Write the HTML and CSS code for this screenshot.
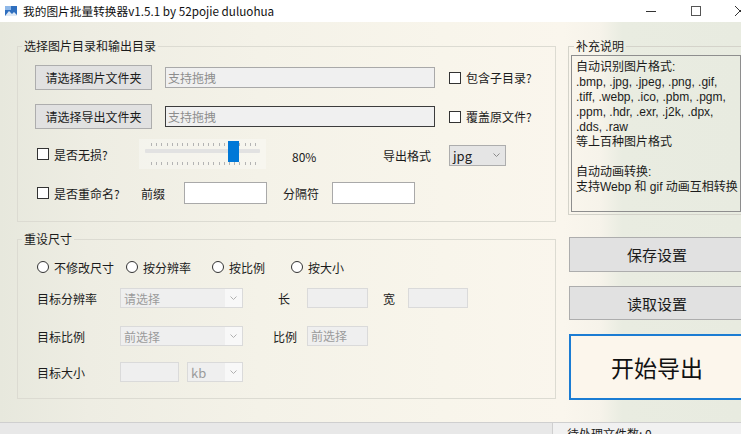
FILE: index.html
```html
<!DOCTYPE html>
<html lang="zh-CN">
<head>
    <meta charset="UTF-8">
    <meta name="viewport" content="width=device-width, initial-scale=1.0">
    <title>我的图片批量转换器v1.5.1 by 52pojie duluohua</title>
    <link rel="stylesheet" href="styles.css">
</head>
<body>
<div class="window">
    <div class="titlebar">
        <svg class="app-icon" viewBox="0 0 12 10" width="12" height="10">
            <rect x="0" y="0" width="12" height="10" fill="#2f6fbf"/>
            <rect x="0" y="0" width="6" height="4" fill="#8fb8e8"/>
            <path d="M0 10 L4 5 L7 8 L9 6 L12 9 L12 10 Z" fill="#dfe9f4"/>
        </svg>
        <span class="title">我的图片批量转换器v1.5.1 by 52pojie duluohua</span>
        <div class="win-controls">
            <span class="win-min"></span>
            <span class="win-max"></span>
            <span class="win-close">
                <svg viewBox="0 0 10 10" width="10" height="10"><path d="M0 0 L10 10 M10 0 L0 10" stroke="#333" stroke-width="1"/></svg>
            </span>
        </div>
    </div>

    <div class="main">
        <div class="left-col">
            <fieldset class="group group-dirs">
                <legend>选择图片目录和输出目录</legend>
                <div class="row row-dir1">
                    <button class="btn btn-pick">请选择图片文件夹</button>
                    <input class="path-input" type="text" placeholder="支持拖拽">
                    <input class="check check-dir" type="checkbox" id="sub-dir">
                    <label for="sub-dir" class="check-label">包含子目录?</label>
                </div>
                <div class="row row-dir2">
                    <button class="btn btn-pick">请选择导出文件夹</button>
                    <input class="path-input path-focus" type="text" placeholder="支持拖拽">
                    <input class="check check-dir" type="checkbox" id="overwrite">
                    <label for="overwrite" class="check-label">覆盖原文件?</label>
                </div>
                <div class="row row-quality">
                    <input class="check check-first" type="checkbox" id="lossless">
                    <label for="lossless" class="check-label lbl-lossless">是否无损?</label>
                    <div class="slider">
                        <div class="ticks"></div>
                        <div class="track"></div>
                        <div class="ticks ticks-bottom"></div>
                        <div class="thumb"></div>
                    </div>
                    <span class="quality-value">80%</span>
                    <span class="format-label">导出格式</span>
                    <div class="dropdown dropdown-format">
                        <span class="dropdown-text">jpg</span>
                        <span class="dropdown-arrow">
                            <svg viewBox="0 0 7 4" width="7" height="4"><polyline points="0.5,0.5 3.5,3.5 6.5,0.5" fill="none" stroke="#8a8a8a"/></svg>
                        </span>
                    </div>
                </div>
                <div class="row row-rename">
                    <input class="check check-first" type="checkbox" id="rename">
                    <label for="rename" class="check-label lbl-rename">是否重命名?</label>
                    <span class="cell cell-prefix">前缀</span>
                    <input class="name-input" type="text">
                    <span class="cell cell-sep">分隔符</span>
                    <input class="name-input" type="text">
                </div>
            </fieldset>

            <fieldset class="group group-size">
                <legend>重设尺寸</legend>
                <div class="row row-radios">
                    <label class="radio-item radio-w1"><input type="radio" name="mode" class="radio">不修改尺寸</label>
                    <label class="radio-item radio-w2"><input type="radio" name="mode" class="radio">按分辨率</label>
                    <label class="radio-item radio-w3"><input type="radio" name="mode" class="radio">按比例</label>
                    <label class="radio-item"><input type="radio" name="mode" class="radio">按大小</label>
                </div>
                <div class="row row-field row-res">
                    <span class="field-label">目标分辨率</span>
                    <div class="dropdown dropdown-off">
                        <span class="dropdown-text">请选择</span>
                        <span class="dropdown-arrow">
                            <svg viewBox="0 0 7 4" width="7" height="4"><polyline points="0.5,0.5 3.5,3.5 6.5,0.5" fill="none" stroke="#b0b0b0"/></svg>
                        </span>
                    </div>
                    <span class="cell cell-len">长</span>
                    <div class="box-off box-len"></div>
                    <span class="cell cell-wid">宽</span>
                    <div class="box-off box-wid"></div>
                </div>
                <div class="row row-field row-ratio">
                    <span class="field-label">目标比例</span>
                    <div class="dropdown dropdown-off">
                        <span class="dropdown-text">前选择</span>
                        <span class="dropdown-arrow">
                            <svg viewBox="0 0 7 4" width="7" height="4"><polyline points="0.5,0.5 3.5,3.5 6.5,0.5" fill="none" stroke="#b0b0b0"/></svg>
                        </span>
                    </div>
                    <span class="cell cell-ratio">比例</span>
                    <div class="box-off box-len">前选择</div>
                </div>
                <div class="row row-field row-target">
                    <span class="field-label">目标大小</span>
                    <div class="box-off box-size"></div>
                    <div class="dropdown dropdown-off dropdown-unit">
                        <span class="dropdown-text">kb</span>
                        <span class="dropdown-arrow">
                            <svg viewBox="0 0 7 4" width="7" height="4"><polyline points="0.5,0.5 3.5,3.5 6.5,0.5" fill="none" stroke="#b0b0b0"/></svg>
                        </span>
                    </div>
                </div>
            </fieldset>
        </div>

        <div class="right-col">
            <fieldset class="group-notes">
                <legend>补充说明</legend>
                <div class="notes">自动识别图片格式:<br>.bmp, .jpg, .jpeg, .png, .gif,<br>.tiff, .webp, .ico, .pbm, .pgm,<br>.ppm, .hdr, .exr, .j2k, .dpx,<br>.dds, .raw<br>等上百种图片格式<br><br>自动动画转换:<br>支持Webp 和 gif 动画互相转换</div>
            </fieldset>
            <button class="btn btn-side btn-save">保存设置</button>
            <button class="btn btn-side btn-load">读取设置</button>
            <button class="btn-start">开始导出</button>
        </div>
    </div>

    <div class="statusbar">
        <div class="status-left"></div>
        <div class="status-right">待处理文件数: 0</div>
    </div>
</div>
</body>
</html>
```

FILE: styles.css
```css
html, body {
    margin: 0;
    padding: 0;
    width: 741px;
    height: 434px;
    overflow: hidden;
}

body {
    font-family: "Noto Sans CJK SC", "Noto Sans", sans-serif;
    font-size: 12px;
    color: #1b1b1b;
}

.window {
    width: 741px;
    height: 434px;
    display: flex;
    flex-direction: column;
    background: linear-gradient(90deg, #e7e8dd 0%, #eeede3 12%, #f4f2e8 35%, #f8f5eb 60%, #faf6ed 76%, #f6f3ea 81%, #e9ece1 84%, #e8ebe0 100%);
}

/* title bar */
.titlebar {
    height: 22px;
    flex: none;
    background: #fff;
    display: flex;
    align-items: center;
}

.app-icon {
    margin-left: 5px;
}

.title {
    margin-left: 6px;
    line-height: 16px;
    font-size: 11.7px;
    color: #111;
}

.win-controls {
    margin-left: auto;
    display: flex;
    align-items: center;
    height: 22px;
}

.win-min {
    width: 10px;
    height: 1px;
    background: #333;
}

.win-max {
    width: 8px;
    height: 8px;
    border: 1px solid #555;
    margin-left: 35px;
}

.win-close {
    width: 6px;
    height: 10px;
    overflow: hidden;
    margin-left: 34px;
}

.win-close svg {
    display: block;
}

/* main area */
.main {
    height: 400px;
    flex: none;
    display: flex;
}

.left-col {
    width: 560px;
    flex: none;
}

.group {
    margin: 16px 0 0 17px;
    width: 539px;
    box-sizing: border-box;
    border: 1px solid #dcdbd2;
    padding: 0 0 17px 17px;
    min-width: 0;
}

.group legend, .group-notes legend {
    padding: 0 2px;
    line-height: 16px;
    font-size: 12px;
}

.group legend {
    margin-left: -13px;
}

.group-size {
    margin-top: 9px;
    padding-bottom: 16px;
}

.row {
    display: flex;
    align-items: center;
}

.row-dir1 { margin-top: 11px; height: 25px; }
.row-dir2 { margin-top: 14px; height: 25px; }
.row-quality { margin-top: 10px; height: 30px; }
.row-rename { margin-top: 13px; height: 22px; }

.btn {
    font-family: inherit;
    font-size: 12px;
    color: #1b1b1b;
    background: #e1e1e1;
    border: 1px solid #adadad;
    padding: 0;
    margin: 0;
}

.btn-pick {
    width: 117px;
    height: 25px;
}

.path-input {
    margin: 0 0 0 13px;
    width: 270px;
    height: 21px;
    box-sizing: border-box;
    border: 1px solid #a9a9a9;
    background: #f0f0f0;
    padding: 0 2px;
    font-family: inherit;
    font-size: 12px;
}

.path-focus {
    border-color: #3c3c3c;
}

.path-input::placeholder {
    color: #8d8d8d;
}

.check {
    appearance: none;
    -webkit-appearance: none;
    width: 12px;
    height: 12px;
    margin: 0;
    border: 1px solid #333;
    background: #fff;
    box-sizing: border-box;
    flex: none;
}

.check-dir {
    margin-left: 14px;
}

.check-first {
    margin-left: 2px;
}

.check-label {
    margin-left: 5px;
}

.lbl-lossless { width: 85px; }
.lbl-rename { width: 87px; }

/* slider */
.slider {
    position: relative;
    width: 127px;
    height: 30px;
    box-sizing: border-box;
    padding-top: 4px;
    background: rgba(255, 255, 255, 0.3);
    flex: none;
}

.ticks {
    height: 3px;
    width: 105px;
    margin-left: 12px;
    background: repeating-linear-gradient(90deg, #b4b4b4 0 1px, transparent 1px 5.2px);
}

.track {
    height: 4px;
    width: 115px;
    margin: 3px 0 0 6px;
    background: #e2e2e2;
    border-radius: 1px;
}

.ticks-bottom {
    margin-top: 9px;
}

.thumb {
    position: absolute;
    left: 89px;
    top: 2px;
    width: 11px;
    height: 21px;
    background: #0078d7;
}

.quality-value {
    margin-left: 26px;
    width: 91px;
    padding-top: 4px;
}

.format-label {
    width: 66px;
    padding-top: 3px;
}

.dropdown {
    display: flex;
    align-items: center;
    box-sizing: border-box;
    height: 20px;
}

.dropdown-text {
    flex: 1;
    padding-left: 3px;
}

.dropdown-arrow {
    width: 17px;
    height: 100%;
    display: flex;
    align-items: center;
    justify-content: center;
}

.dropdown-format {
    width: 57px;
    height: 21px;
    margin-top: 2px;
    background: #e5e5e5;
    border: 1px solid #adadad;
    font-size: 13px;
    color: #222;
}

.cell-prefix { width: 43px; }
.cell-sep { margin-left: 16px; width: 49px; }

.name-input {
    margin: 0;
    width: 83px;
    height: 22px;
    box-sizing: border-box;
    border: 1px solid #a9a9a9;
    background: #fff;
}

/* resize group */
.row-radios { margin-top: 12px; height: 16px; padding-left: 2px; }
.row-res { margin-top: 13px; height: 20px; }
.row-ratio { margin-top: 18px; height: 20px; }
.row-target { margin-top: 16px; height: 20px; }

.radio-item {
    display: flex;
    align-items: center;
}

.radio-w1 { width: 89px; }
.radio-w2 { width: 86px; }
.radio-w3 { width: 79px; }

.radio {
    appearance: none;
    -webkit-appearance: none;
    width: 12px;
    height: 12px;
    margin: 0 5px 0 0;
    border: 1px solid #333;
    border-radius: 50%;
    background: #fff;
    box-sizing: border-box;
}

.field-label {
    width: 83px;
    padding-left: 2px;
}

.dropdown-off {
    width: 123px;
    background: #efefef;
    border: 1px solid #dadada;
    color: #9b9b9b;
}

.dropdown-off .dropdown-arrow {
    background: #f8f8f8;
}

.dropdown-unit {
    width: 56px;
    margin-left: 8px;
    font-size: 13px;
}

.cell-len { width: 64px; box-sizing: border-box; padding-left: 35px; }
.cell-wid { width: 40px; box-sizing: border-box; padding-left: 15px; }
.cell-ratio { width: 64px; box-sizing: border-box; padding-left: 30px; }

.box-off {
    height: 20px;
    box-sizing: border-box;
    background: #efefef;
    border: 1px solid #dadada;
    color: #9b9b9b;
    padding-left: 3px;
    line-height: 18px;
}

.box-len { width: 61px; }
.box-wid { width: 60px; }
.box-size { width: 59px; }

/* right column */
.right-col {
    width: 181px;
    flex: none;
    display: flex;
    flex-direction: column;
}

.group-notes {
    margin: 16px 0 0 8px;
    width: 174px;
    box-sizing: border-box;
    border: 1px solid #d4d3ca;
    padding: 1px 0 2px 2px;
    min-width: 0;
}

.group-notes legend {
    margin-left: 3px;
}

.notes {
    width: 170px;
    height: 157px;
    box-sizing: border-box;
    border: 1px solid #8e8e8e;
    padding: 4px 4px;
    font-family: "Liberation Sans", "Noto Sans CJK SC", sans-serif;
    line-height: 15px;
    white-space: nowrap;
    overflow: hidden;
}

.btn-side {
    margin-left: 9px;
    width: 176px;
    flex: none;
    font-size: 15px;
}

.btn-save { margin-top: 22px; height: 35px; }
.btn-load { margin-top: 14px; height: 34px; }

.btn-start {
    margin: 14px 0 0 9px;
    width: 176px;
    height: 66px;
    flex: none;
    font-family: inherit;
    font-size: 23px;
    color: #111;
    background: #fcf6ec;
    border: 2px solid #1b7cd3;
    padding: 0;
}

/* status bar */
.statusbar {
    height: 22px;
    flex: none;
    display: flex;
}

.status-left {
    width: 552px;
    background: #e8e8e8;
    border-top: 1px solid #cfcfcf;
    border-right: 1px solid #cfcfcf;
}

.status-right {
    flex: 1;
    background: #f1f1f1;
    border-top: 1px solid #cfcfcf;
    padding: 3px 0 0 14px;
    line-height: 16px;
}
```
